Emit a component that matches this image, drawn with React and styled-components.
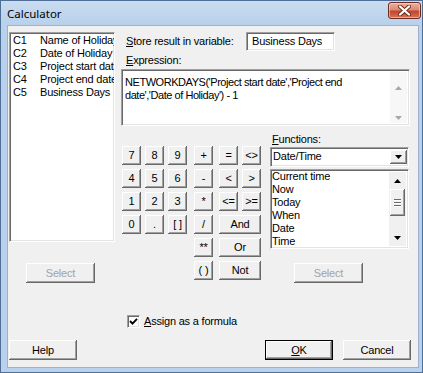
import React from 'react';
import styled, { createGlobalStyle, css } from 'styled-components';

const Global = createGlobalStyle`
  html, body { margin: 0; padding: 0; background: #ffffff; }
  body { font-family: "Liberation Sans", Arial, sans-serif; }
`;

const sunken = css`
  box-sizing: border-box;
  background: #ffffff;
  border-style: solid;
  border-width: 1px;
  border-color: #a0a0a0 #ffffff #ffffff #a0a0a0;
  box-shadow: inset 1px 1px #696969, inset -1px -1px #e3e3e3;
`;

const raised = css`
  box-sizing: border-box;
  background: #f0f0f0;
  box-shadow: inset -1px -1px #696969, inset 1px 1px #ffffff,
    inset -2px -2px #a0a0a0, inset 2px 2px #f0f0f0;
`;

const Win = styled.div`
  box-sizing: border-box;
  width: 423px;
  height: 373px;
  border: 1px solid #4d6f98;
  background: linear-gradient(#cadcf1 0, #b9d1ea 22px, #b9d1ea 100%);
  padding: 0 3px 4px 6px;
  display: flex;
  flex-direction: column;
`;

const TitleBar = styled.div`
  height: 24px;
  display: flex;
  align-items: flex-start;
`;

const Title = styled.div`
  font-family: "Noto Sans", "Open Sans", sans-serif;
  font-size: 11.5px;
  line-height: 16px;
  color: #000;
  padding-top: 5px;
`;

const CloseBtn = styled.div`
  box-sizing: border-box;
  margin-left: auto;
  margin-top: 1px;
  margin-right: -2px;
  width: 33px;
  height: 17px;
  border: 1px solid #6e2b20;
  border-radius: 3px;
  background: linear-gradient(#eab0a1 0%, #d98a75 45%, #c4452c 55%, #d3735c 100%);
  box-shadow: inset 0 0 0 1px rgba(255, 220, 210, 0.55);
  display: flex;
  align-items: center;
  justify-content: center;
`;

const Client = styled.div`
  flex: 1;
  box-sizing: border-box;
  background: #f0f0f0;
  border: 1px solid #9ab2d0;
  display: flex;
  flex-direction: column;
  font-size: 11px;
  letter-spacing: -0.2px;
  color: #000;
`;

const TopArea = styled.div`
  display: flex;
  padding-top: 6px;
`;

const LeftCol = styled.div`
  display: flex;
  flex-direction: column;
  margin-left: 1px;
  width: 106px;
`;

const ListBox = styled.div`
  ${sunken}
  width: ${(p) => p.$w}px;
  height: ${(p) => p.$h}px;
  margin-top: ${(p) => p.$mt || 0}px;
  padding: ${(p) => p.$pad || '1px 0 0 3px'};
  overflow: hidden;
  position: relative;
`;

const ColRow = styled.div`
  display: flex;
  height: 13px;
  line-height: 13px;
  white-space: nowrap;
`;

const ColId = styled.span`
  flex: none;
  width: 27px;
`;

const Btn = styled.div`
  ${raised}
  width: ${(p) => p.$w || 68}px;
  height: ${(p) => p.$h || 20}px;
  display: flex;
  align-items: center;
  justify-content: center;
  color: ${(p) => (p.$disabled ? '#a3a3a3' : '#000')};
  margin-top: ${(p) => p.$mt || 0}px;
  margin-left: ${(p) => p.$ml || 0}px;
  ${(p) =>
    p.$default &&
    css`
      border: 1px solid #000;
      box-shadow: inset -1px -1px #696969, inset 1px 1px #ffffff,
        inset -2px -2px #a0a0a0;
    `}
`;

const RightCol = styled.div`
  display: flex;
  flex-direction: column;
  margin-left: 6px;
  width: 289px;
`;

const StoreRow = styled.div`
  display: flex;
  align-items: center;
  height: 19px;
`;

const Label = styled.div`
  flex: none;
  width: ${(p) => p.$w || 'auto'};
  padding-left: ${(p) => p.$pl || 0}px;
  margin-top: ${(p) => p.$mt || 0}px;
  line-height: 13px;
  box-sizing: border-box;
  white-space: nowrap;
`;

const TextBox = styled.div`
  ${sunken}
  width: 89px;
  height: 19px;
  padding-left: 5px;
  line-height: 17px;
  white-space: nowrap;
`;

const ExprBox = styled.div`
  ${sunken}
  margin-top: 2px;
  width: 289px;
  height: 57px;
  display: flex;
`;

const ExprText = styled.div`
  flex: 1;
  padding: 6px 0 0 3px;
  line-height: 13px;
  letter-spacing: -0.45px;
`;

const ScrollBar = styled.div`
  flex: none;
  width: 17px;
  margin: 2px 2px 2px 0;
  background: ${(p) => p.$bg || '#f0f0f0'};
  display: flex;
  flex-direction: column;
  align-items: center;
  position: ${(p) => (p.$abs ? 'absolute' : 'static')};
  top: 0;
  right: 0;
  bottom: 0;
`;

const ArrowCell = styled.div`
  height: ${(p) => p.$h || 17}px;
  width: 17px;
  display: flex;
  align-items: center;
  justify-content: center;
  margin-top: ${(p) => p.$mt || 0}px;
`;

const Thumb = styled.div`
  ${raised}
  width: 15px;
  height: 27px;
  display: flex;
  flex-direction: column;
  align-items: center;
  justify-content: center;
  gap: 1px;
`;

const Grip = styled.div`
  width: 7px;
  height: 1px;
  background: #6a6a6a;
  box-shadow: 0 1px #ffffff;
  margin-bottom: 1px;
`;

const LowerRow = styled.div`
  display: flex;
`;

const Keypad = styled.div`
  display: grid;
  grid-template-columns: 23px 23px 26px 25px 23px 19px;
  grid-auto-rows: 19px;
  row-gap: 4px;
  margin-left: 1px;
  margin-top: 20px;
  align-self: flex-start;
`;

const Key = styled.div`
  ${raised}
  grid-column: ${(p) => p.$col} / span ${(p) => p.$span || 1};
  grid-row: ${(p) => p.$row};
  width: ${(p) => (p.$span ? 42 : 19)}px;
  height: 19px;
  display: flex;
  align-items: center;
  justify-content: center;
  line-height: 13px;
`;

const FuncCol = styled.div`
  display: flex;
  flex-direction: column;
  margin-left: 9px;
  width: 139px;
`;

const Combo = styled.div`
  ${sunken}
  margin-top: 1px;
  height: 20px;
  display: flex;
  align-items: stretch;
`;

const ComboText = styled.div`
  flex: 1;
  padding-left: 2px;
  line-height: 16px;
`;

const ComboBtn = styled.div`
  ${raised}
  width: 17px;
  margin: 2px 1px 2px 0;
  display: flex;
  align-items: center;
  justify-content: center;
`;

const FuncItem = styled.div`
  height: 13px;
  line-height: 13px;
  white-space: nowrap;
`;

const CheckRow = styled.div`
  display: flex;
  align-items: center;
  margin-top: 32px;
  margin-left: 119px;
  height: 13px;
`;

const CheckBox = styled.div`
  ${sunken}
  width: 13px;
  height: 13px;
  display: flex;
  align-items: center;
  justify-content: center;
`;

const CheckLabel = styled.span`
  margin-left: 4px;
  line-height: 13px;
`;

const BottomRow = styled.div`
  display: flex;
  margin-top: 12px;
  padding: 0 7px 0 1px;
`;

const Spacer = styled.div`
  flex: 1;
`;

const U = styled.span`
  text-decoration: underline;
  text-underline-offset: 1px;
`;

const Tri = ({ up, color = '#000' }) => (
  <svg width="7" height="4" viewBox="0 0 7 4">
    <polygon points={up ? '3.5,0 7,4 0,4' : '0,0 7,0 3.5,4'} fill={color} />
  </svg>
);

const CloseGlyph = () => (
  <svg width="13" height="11" viewBox="0 0 13 11">
    <path d="M2 1.5 L11 9.5 M11 1.5 L2 9.5" stroke="#6b2518" strokeWidth="4" strokeLinecap="round" />
    <path d="M2 1.5 L11 9.5 M11 1.5 L2 9.5" stroke="#ffffff" strokeWidth="2.3" strokeLinecap="round" />
  </svg>
);

const CheckGlyph = () => (
  <svg width="9" height="9" viewBox="0 0 9 9">
    <polyline points="1,4 3.5,6.6 8,1.8" fill="none" stroke="#000" strokeWidth="1.9" />
  </svg>
);

const columns = [
  ['C1', 'Name of Holiday'],
  ['C2', 'Date of Holiday'],
  ['C3', 'Project start date'],
  ['C4', 'Project end date'],
  ['C5', 'Business Days'],
];

const keys = [
  ['7', 1, 1], ['8', 2, 1], ['9', 3, 1], ['+', 4, 1], ['=', 5, 1], ['<>', 6, 1],
  ['4', 1, 2], ['5', 2, 2], ['6', 3, 2], ['-', 4, 2], ['<', 5, 2], ['>', 6, 2],
  ['1', 1, 3], ['2', 2, 3], ['3', 3, 3], ['*', 4, 3], ['<=', 5, 3], ['>=', 6, 3],
  ['0', 1, 4], ['.', 2, 4], ['[ ]', 3, 4], ['/', 4, 4], ['And', 5, 4, 2],
  ['**', 4, 5], ['Or', 5, 5, 2],
  ['( )', 4, 6], ['Not', 5, 6, 2],
];

const functions = ['Current time', 'Now', 'Today', 'When', 'Date', 'Time'];

export default function App() {
  return (
    <>
      <Global />
      <Win>
        <TitleBar>
          <Title>Calculator</Title>
          <CloseBtn>
            <CloseGlyph />
          </CloseBtn>
        </TitleBar>
        <Client>
          <TopArea>
            <LeftCol>
              <ListBox $w={106} $h={210}>
                {columns.map(([id, name]) => (
                  <ColRow key={id}>
                    <ColId>{id}</ColId>
                    <span>{name}</span>
                  </ColRow>
                ))}
              </ListBox>
              <Btn $w={69} $mt={21} $ml={17} $disabled>
                Select
              </Btn>
            </LeftCol>
            <RightCol>
              <StoreRow>
                <Label $w="125px" $pl={5}>
                  <U>S</U>tore result in variable:
                </Label>
                <TextBox>Business Days</TextBox>
              </StoreRow>
              <Label $pl={5} $mt={3}>
                <U>E</U>xpression:
              </Label>
              <ExprBox>
                <ExprText>
                  NETWORKDAYS('Project start date','Project end
                  <br />
                  date','Date of Holiday') - 1
                </ExprText>
                <ScrollBar $bg="#f7f7f7">
                  <ArrowCell $h={10} $mt={11}>
                    <Tri up color="#a8a8a8" />
                  </ArrowCell>
                  <Spacer />
                  <ArrowCell $h={11}>
                    <Tri color="#a8a8a8" />
                  </ArrowCell>
                </ScrollBar>
              </ExprBox>
              <LowerRow>
                <Keypad>
                  {keys.map(([k, c, r, s]) => (
                    <Key key={k} $col={c} $row={r} $span={s}>
                      {k}
                    </Key>
                  ))}
                </Keypad>
                <FuncCol>
                  <Label $pl={2} $mt={7}>
                    <U>F</U>unctions:
                  </Label>
                  <Combo>
                    <ComboText>Date/Time</ComboText>
                    <ComboBtn>
                      <Tri />
                    </ComboBtn>
                  </Combo>
                  <ListBox $w={139} $h={80} $mt={2} $pad="0 0 0 1px">
                    {functions.map((f) => (
                      <FuncItem key={f}>{f}</FuncItem>
                    ))}
                    <ScrollBar $abs>
                      <ArrowCell>
                        <Tri up />
                      </ArrowCell>
                      <Thumb>
                        <Grip />
                        <Grip />
                        <Grip />
                      </Thumb>
                      <Spacer />
                      <ArrowCell>
                        <Tri />
                      </ArrowCell>
                    </ScrollBar>
                  </ListBox>
                  <Btn $w={69} $mt={14} $ml={24} $disabled>
                    Select
                  </Btn>
                </FuncCol>
              </LowerRow>
            </RightCol>
          </TopArea>
          <CheckRow>
            <CheckBox>
              <CheckGlyph />
            </CheckBox>
            <CheckLabel>
              <U>A</U>ssign as a formula
            </CheckLabel>
          </CheckRow>
          <BottomRow>
            <Btn>Help</Btn>
            <Spacer />
            <Btn $default>
              <span>
                <U>O</U>K
              </span>
            </Btn>
            <Btn $ml={10}>Cancel</Btn>
          </BottomRow>
        </Client>
      </Win>
    </>
  );
}
